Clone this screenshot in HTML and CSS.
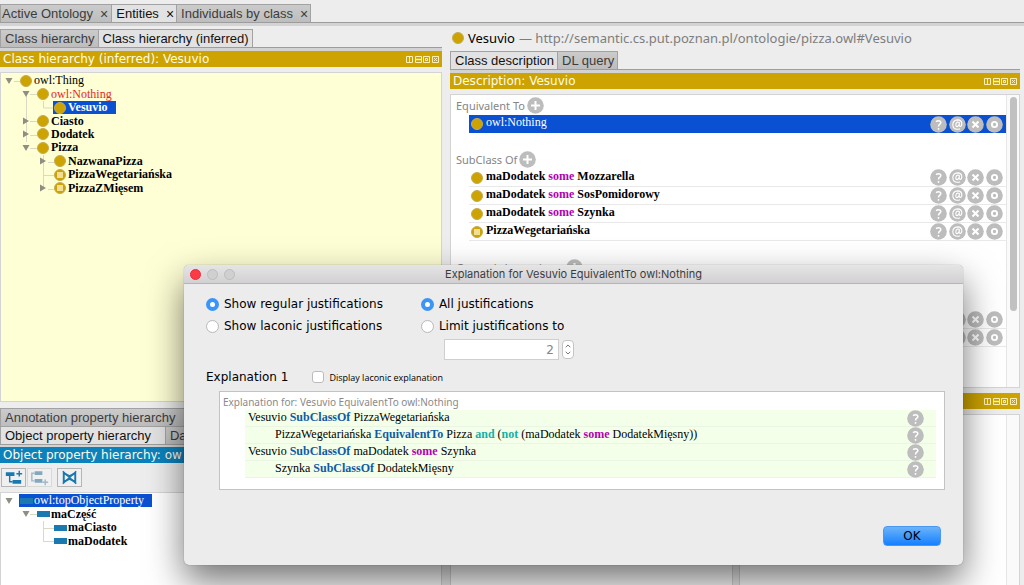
FILE: index.html
```html
<!DOCTYPE html>
<html lang="en">
<head>
<meta charset="utf-8">
<title>Ontology editor</title>
<link rel="stylesheet" href="styles.css">
</head>
<body>
<svg class="defs" aria-hidden="true">
  <symbol id="cls" viewBox="0 0 12 12"><circle cx="6" cy="6" r="5.5" fill="#cca300" stroke="#c4ab55"/></symbol>
  <symbol id="cls-def" viewBox="0 0 12 12"><circle cx="6" cy="6" r="5.5" fill="#cca300" stroke="#c4ab55"/><path d="M3 4h6M3 6h6M3 8h6" stroke="#fff3c4" stroke-width="1.300"/></symbol>
  <symbol id="prop" viewBox="0 0 13 6"><path d="M0 0h13v6H0z" fill="#1a79b0"/></symbol>
  <symbol id="open" viewBox="0 0 8 8"><path d="M.5 1h7L4 7z" fill="#8e8e82"/></symbol>
  <symbol id="closed" viewBox="0 0 8 8"><path d="M1 .5v7l6-3.500z" fill="#8e8e82"/></symbol>
  <symbol id="plus" viewBox="0 0 17 17"><circle cx="8.500" cy="8.500" r="8.300" fill="#bdbdbd"/><path d="M8.500 4v9M4 8.500h9" stroke="#fff" stroke-width="2"/></symbol>
  <symbol id="ask" viewBox="0 0 17 17"><circle cx="8.500" cy="8.500" r="8.300" fill="#bdbdbd"/><path d="M6 5.600q2.200-1.500 4-.5 1.700 1.400 0 2.900-1.600 1-1.500 2.500M8.500 12v1.700" fill="none" stroke="#fff" stroke-width="1.500"/></symbol>
  <symbol id="at" viewBox="0 0 17 17"><circle cx="8.500" cy="8.500" r="8.300" fill="#bdbdbd"/><path d="M10.500 6.500q-3-1.200-3.600 1.600-.4 2.600 1.300 2.500 1.700-.3 2.300-4.100-.8 3.900.6 4 1.700-.2 1.700-2.700 0-3.800-4.200-3.900-4.600.3-4.800 4.800.2 4.500 4.600 4.600 1.600 0 2.600-.6" fill="none" stroke="#fff" stroke-width="1.100"/></symbol>
  <symbol id="del" viewBox="0 0 17 17"><circle cx="8.500" cy="8.500" r="8.300" fill="#bdbdbd"/><path d="M5.500 5.500l6 6M11.500 5.500l-6 6" stroke="#fff" stroke-width="2"/></symbol>
  <symbol id="edit" viewBox="0 0 17 17"><circle cx="8.500" cy="8.500" r="8.300" fill="#bdbdbd"/><circle cx="8.500" cy="8.500" r="2.600" fill="none" stroke="#fff" stroke-width="1.900"/></symbol>
  <symbol id="wins" viewBox="0 0 34 9"><g fill="none" stroke="#fff0b8"><path d="M1.500 1.500h6v6h-6zM4.500 1.500v6M10.500 1.500h6v6h-6zM18.500 1.500h6v6h-6zM27.500 1.500h6v6h-6z"/><path d="M10 4.500h7" stroke-width="1.500"/><path d="M20.500 3.500h2v2h-2zM29 3l3 3M32 3l-3 3"/></g></symbol>
</svg>

<nav class="tabs main-tabs">
  <button class="tab">Active Ontology<span class="close">×</span></button>
  <button class="tab on">Entities<span class="close">×</span></button>
  <button class="tab">Individuals by class<span class="close">×</span></button>
</nav>
<div class="band"></div>

<main class="workspace">
  <section class="left">
    <div class="tabs"><button class="tab">Class hierarchy</button><button class="tab on">Class hierarchy (inferred)</button></div>
    <div class="band"></div>
    <h2 class="title">Class hierarchy (inferred): Vesuvio<svg class="wins"><use href="#wins"/></svg></h2>
    <div class="panel yellow">
      <div class="tree classes">
        <svg class="twigs" viewBox="0 0 60 121"><path d="M25.500 21v47M42.500 27v7h10M29 20.500h7M29 47.500h7M29 61.500h7M29 74.500h7M42.500 81v33M47 88.500h6M42 101.500h11M47 115.500h6M13 7.500h6"/></svg>
        <div class="row"><svg class="arrow"><use href="#open"/></svg><span class="node"><svg class="dot"><use href="#cls"/></svg>owl:Thing</span></div>
        <div class="row l1 bad"><svg class="arrow"><use href="#open"/></svg><span class="node"><svg class="dot"><use href="#cls"/></svg>owl:Nothing</span></div>
        <div class="row l2 bold"><span class="arrow"></span><span class="node sel"><svg class="dot"><use href="#cls"/></svg>Vesuvio</span></div>
        <div class="row l1 bold"><svg class="arrow"><use href="#closed"/></svg><span class="node"><svg class="dot"><use href="#cls"/></svg>Ciasto</span></div>
        <div class="row l1 bold"><svg class="arrow"><use href="#closed"/></svg><span class="node"><svg class="dot"><use href="#cls"/></svg>Dodatek</span></div>
        <div class="row l1 bold"><svg class="arrow"><use href="#open"/></svg><span class="node"><svg class="dot"><use href="#cls"/></svg>Pizza</span></div>
        <div class="row l2 bold"><svg class="arrow"><use href="#closed"/></svg><span class="node"><svg class="dot"><use href="#cls"/></svg>NazwanaPizza</span></div>
        <div class="row l2 bold"><span class="arrow"></span><span class="node"><svg class="dot"><use href="#cls-def"/></svg>PizzaWegetariańska</span></div>
        <div class="row l2 bold"><svg class="arrow"><use href="#closed"/></svg><span class="node"><svg class="dot"><use href="#cls-def"/></svg>PizzaZMięsem</span></div>
      </div>
    </div>
    <div class="lower">
      <div class="tabs"><button class="tab wide">Annotation property hierarchy</button></div>
      <div class="tabs second"><button class="tab on roomy">Object property hierarchy</button><button class="tab wide">Da</button></div>
      <div class="band thin"></div>
      <h2 class="title blue">Object property hierarchy: ow</h2>
      <div class="tools">
        <button class="tool" aria-label="Add sub property"><svg viewBox="0 0 24 17"><path d="M4 3h9v4H4zM11 11h9v4h-9z" fill="#1a79b0"/><path d="M8 7v6h3M15 4.500h6M18 1.500v6" fill="none" stroke="#1a79b0" stroke-width="1.500"/></svg></button>
        <button class="tool dim" aria-label="Add sibling property"><svg viewBox="0 0 24 17"><path d="M7 2h8v4H7zM7 10h8v4H7z" fill="#84a9bd"/><path d="M7 4H4v8h3M15 13.500h6M18 10.500v6" fill="none" stroke="#9fbac8" stroke-width="1.500"/></svg></button>
        <button class="tool last" aria-label="Delete property"><svg viewBox="0 0 24 17"><path d="M6 4v9l6-3 6 3V4l-6 3z" fill="none" stroke="#1a79b0" stroke-width="2"/><path d="M5 2l14 13M19 2L5 15" stroke="#1a79b0" stroke-width="1.500"/></svg></button>
      </div>
      <div class="panel fill">
        <div class="tree props">
          <svg class="twigs" viewBox="0 0 60 54"><path d="M29 20.500h7M42.500 27v21M42 34.500h11M42 47.500h11"/></svg>
          <div class="row"><svg class="arrow"><use href="#open"/></svg><span class="node sel"><svg class="bar"><use href="#prop"/></svg>owl:topObjectProperty</span></div>
          <div class="row l1 bold"><svg class="arrow"><use href="#open"/></svg><span class="node"><svg class="bar"><use href="#prop"/></svg>maCzęść</span></div>
          <div class="row l2 bold"><span class="arrow"></span><span class="node"><svg class="bar"><use href="#prop"/></svg>maCiasto</span></div>
          <div class="row l2 bold"><span class="arrow"></span><span class="node"><svg class="bar"><use href="#prop"/></svg>maDodatek</span></div>
        </div>
      </div>
    </div>
  </section>

  <section class="right">
    <h1 class="entity"><svg class="dot"><use href="#cls"/></svg>Vesuvio <span class="uri">— http://semantic.cs.put.poznan.pl/ontologie/pizza.owl#Vesuvio</span></h1>
    <div class="tabs"><button class="tab on">Class description</button><button class="tab">DL query</button></div>
    <div class="band"></div>
    <h2 class="title">Description: Vesuvio<svg class="wins"><use href="#wins"/></svg></h2>
    <div class="panel desc">
      <div class="axioms">
        <h3 class="head">Equivalent To <button class="ib" aria-label="Add"><svg><use href="#plus"/></svg></button></h3>
        <div class="axiom picked"><svg class="dot"><use href="#cls"/></svg><span class="text">owl:Nothing</span><span class="acts"><button class="ib" aria-label="Explain"><svg><use href="#ask"/></svg></button><button class="ib" aria-label="Annotate"><svg><use href="#at"/></svg></button><button class="ib" aria-label="Delete"><svg><use href="#del"/></svg></button><button class="ib" aria-label="Edit"><svg><use href="#edit"/></svg></button></span></div>
        <h3 class="head later">SubClass Of <button class="ib" aria-label="Add"><svg><use href="#plus"/></svg></button></h3>
        <div class="axiom"><svg class="dot"><use href="#cls"/></svg><span class="text">maDodatek <b class="some">some</b> Mozzarella</span><span class="acts"><button class="ib" aria-label="Explain"><svg><use href="#ask"/></svg></button><button class="ib" aria-label="Annotate"><svg><use href="#at"/></svg></button><button class="ib" aria-label="Delete"><svg><use href="#del"/></svg></button><button class="ib" aria-label="Edit"><svg><use href="#edit"/></svg></button></span></div>
        <div class="axiom"><svg class="dot"><use href="#cls"/></svg><span class="text">maDodatek <b class="some">some</b> SosPomidorowy</span><span class="acts"><button class="ib" aria-label="Explain"><svg><use href="#ask"/></svg></button><button class="ib" aria-label="Annotate"><svg><use href="#at"/></svg></button><button class="ib" aria-label="Delete"><svg><use href="#del"/></svg></button><button class="ib" aria-label="Edit"><svg><use href="#edit"/></svg></button></span></div>
        <div class="axiom"><svg class="dot"><use href="#cls"/></svg><span class="text">maDodatek <b class="some">some</b> Szynka</span><span class="acts"><button class="ib" aria-label="Explain"><svg><use href="#ask"/></svg></button><button class="ib" aria-label="Annotate"><svg><use href="#at"/></svg></button><button class="ib" aria-label="Delete"><svg><use href="#del"/></svg></button><button class="ib" aria-label="Edit"><svg><use href="#edit"/></svg></button></span></div>
        <div class="axiom"><svg class="dot"><use href="#cls-def"/></svg><span class="text">PizzaWegetariańska</span><span class="acts"><button class="ib" aria-label="Explain"><svg><use href="#ask"/></svg></button><button class="ib" aria-label="Annotate"><svg><use href="#at"/></svg></button><button class="ib" aria-label="Delete"><svg><use href="#del"/></svg></button><button class="ib" aria-label="Edit"><svg><use href="#edit"/></svg></button></span></div>
        <h3 class="head later">General class axioms <button class="ib" aria-label="Add"><svg><use href="#plus"/></svg></button></h3>
        <div class="inherited">
          <div class="axiom"><span class="text"></span><span class="acts"><button class="ib" aria-label="Explain"><svg><use href="#ask"/></svg></button><button class="ib" aria-label="Annotate"><svg><use href="#at"/></svg></button><button class="ib" aria-label="Delete"><svg><use href="#del"/></svg></button><button class="ib" aria-label="Edit"><svg><use href="#edit"/></svg></button></span></div>
          <div class="axiom"><span class="text"></span><span class="acts"><button class="ib" aria-label="Explain"><svg><use href="#ask"/></svg></button><button class="ib" aria-label="Annotate"><svg><use href="#at"/></svg></button><button class="ib" aria-label="Delete"><svg><use href="#del"/></svg></button><button class="ib" aria-label="Edit"><svg><use href="#edit"/></svg></button></span></div>
        </div>
      </div>
      <div class="track"><div class="thumb"></div></div>
    </div>
    <div class="split">
      <div class="pane"><h2 class="title"></h2><div class="panel fill"></div></div>
      <div class="pane"><h2 class="title"><svg class="wins"><use href="#wins"/></svg></h2><div class="panel fill tracked"><div class="track"></div></div></div>
    </div>
  </section>
</main>

<div class="dialog" role="dialog" aria-labelledby="dlg-title">
  <header class="dlg-bar">
    <span class="lights"><i class="light red"></i><i class="light"></i><i class="light"></i></span>
    <span id="dlg-title">Explanation for Vesuvio EquivalentTo owl:Nothing</span>
  </header>
  <form class="dlg-body">
    <div class="options">
      <div class="group">
        <label class="opt"><input type="radio" name="kind" checked>Show regular justifications</label>
        <label class="opt"><input type="radio" name="kind">Show laconic justifications</label>
      </div>
      <div class="group">
        <label class="opt"><input type="radio" name="limit" checked>All justifications</label>
        <label class="opt"><input type="radio" name="limit">Limit justifications to</label>
        <div class="spin"><input class="count" type="text" value="2" aria-label="Number of justifications"><button type="button" class="step" aria-label="Change number"><svg viewBox="0 0 11 18"><path d="M3 6.500L5.500 4 8 6.500M3 11.500L5.500 14 8 11.500" fill="none" stroke="#666"/></svg></button></div>
      </div>
    </div>
    <div class="ex-head"><span class="ex-name">Explanation 1</span><label class="laconic"><input type="checkbox">Display laconic explanation</label></div>
    <div class="ex-box">
      <div class="ex-for">Explanation for: Vesuvio EquivalentTo owl:Nothing</div>
      <div class="ex-row"><span class="text">Vesuvio <b class="kw">SubClassOf</b> PizzaWegetariańska</span><button type="button" class="ib" aria-label="Explain"><svg><use href="#ask"/></svg></button></div>
      <div class="ex-row deep"><span class="text">PizzaWegetariańska <b class="kw">EquivalentTo</b> Pizza <b class="op">and</b> (<b class="op">not</b> (maDodatek <b class="some">some</b> DodatekMięsny))</span><button type="button" class="ib" aria-label="Explain"><svg><use href="#ask"/></svg></button></div>
      <div class="ex-row"><span class="text">Vesuvio <b class="kw">SubClassOf</b> maDodatek <b class="some">some</b> Szynka</span><button type="button" class="ib" aria-label="Explain"><svg><use href="#ask"/></svg></button></div>
      <div class="ex-row deep"><span class="text">Szynka <b class="kw">SubClassOf</b> DodatekMięsny</span><button type="button" class="ib" aria-label="Explain"><svg><use href="#ask"/></svg></button></div>
    </div>
    <div class="dlg-foot"><button type="button" class="ok">OK</button></div>
  </form>
</div>
</body>
</html>
```
FILE: styles.css
```css
* { box-sizing: border-box; }
body {
  margin: 0;
  height: 100vh;
  overflow: hidden;
  display: flex;
  flex-direction: column;
  background: #ededed;
  color: #000;
  font: 12px "DejaVu Sans", sans-serif;
}
svg { display: block; flex: none; }
button { margin: 0; padding: 0; border: 0; background: none; color: inherit; font: inherit; }
h1, h2, h3 { margin: 0; font-weight: normal; }
.defs { position: absolute; width: 0; height: 0; }

/* tabs */
.tabs { display: flex; height: 18px; flex: none; }
.main-tabs { margin-top: 4px; }
.tab {
  display: flex;
  align-items: center;
  padding: 0 3px 0 4px;
  border: 1px solid #a2a2a2;
  border-bottom: 0;
  background: linear-gradient(#cbcbcb, #bdbdbd);
  color: #3c3c3c;
  font: 13px "Liberation Sans", sans-serif;
  white-space: nowrap;
}
.tab + .tab { border-left: 0; }
.tab.on { background: #e2e2e2; color: #111; }
.main-tabs .tab { padding: 0 3px 0 1px; }
.main-tabs .tab + .tab { padding: 0 2px 0 4px; }
.close { margin-left: 7px; font-size: 14px; }
.tab.wide { flex: 1; }
.tab.roomy { padding-right: 14px; }
.band { height: 4px; flex: none; border-top: 1px solid #9d9d9d; background: #d3d3d3; }
.band.thin { height: 3px; }

/* columns */
.workspace {
  flex: 1;
  min-height: 0;
  display: grid;
  grid-template-columns: 442fr 570fr;
  gap: 8px;
  padding: 3px 4px 0 0;
}
.left, .right { display: flex; flex-direction: column; min-width: 0; min-height: 0; }
.title {
  display: flex;
  align-items: center;
  justify-content: space-between;
  flex: none;
  height: 16px;
  padding: 0 3px;
  background: #cca300;
  color: #fffbe8;
  font-size: 12px;
  white-space: nowrap;
  overflow: hidden;
}
.title.blue { background: #0c82bd; }
.wins { width: 34px; height: 9px; margin-left: auto; }
.panel { margin-top: 5px; border: 1px solid #d4d4d4; background: #fff; }
.yellow { flex: none; height: 330px; background: #ffffd5; }
.fill { flex: 1; border-bottom: 0; }
.lower { display: flex; flex-direction: column; flex: 1; padding-top: 6px; min-height: 0; }

/* trees */
.tree { position: relative; display: flex; flex-direction: column; font: 12px/13px "Liberation Serif", serif; }
.classes { min-height: 121px; margin-top: 1px; }
.props { min-height: 54px; margin-top: 1px; }
.twigs { position: absolute; left: 0; top: 0; width: 60px; height: 100%; }
.twigs path { fill: none; stroke: #d9d9c4; }
.row { position: relative; flex: 1; display: flex; align-items: center; padding-left: 4px; }
.l1 { padding-left: 21px; }
.l2 { padding-left: 38px; }
.bold { font-weight: bold; }
.bad { color: #e8261a; }
.arrow { width: 8px; height: 8px; margin-right: 6px; }
.node { display: flex; align-items: center; gap: 2px; padding: 0 8px 0 1px; }
.sel { background: #0a50d2; color: #fff; }
.dot { width: 12px; height: 12px; }
.bar { width: 13px; height: 6px; }
.props .node { gap: 1px; }

/* property toolbar */
.tools { display: flex; gap: 1px; padding: 5px 1px 0; height: 25px; }
.tool { width: 25px; height: 19px; border: 1px solid #b5b5b5; background: #f0f0f0; }
.tool.dim { border-color: #d8d8d8; }
.tool.last { margin-left: 4px; }
.tool svg { width: 23px; height: 17px; }
.tools + .panel { margin-top: 4px; }

/* entity header and description */
.entity { display: flex; align-items: center; flex: none; gap: 4px; height: 18px; margin-bottom: 4px; padding-left: 2px; font: 13px "Noto Sans", sans-serif; white-space: nowrap; }
.uri { color: #7d7d7d; }
.desc { display: flex; flex: none; height: 294px; }
.axioms { flex: 1; padding: 1px 0 0 5px; }
.track { width: 13px; padding: 2px; border-left: 1px solid #e6e6e6; background: #fafafa; }
.thumb { width: 7px; height: 214px; margin-left: 1px; border-radius: 4px; background: #c1c1c1; }
.head { display: flex; align-items: center; gap: 2px; height: 19px; color: #858585; font: 11px "Noto Sans", sans-serif; }
.head.later { margin-top: 17px; }
.ib { width: 17px; height: 17px; flex: none; }
.ib svg { width: 17px; height: 17px; }
.axiom {
  display: flex;
  align-items: center;
  height: 18px;
  margin-left: 13px;
  padding: 0 3px 0 2px;
  border-bottom: 1px solid #e9e9e9;
  font: bold 12px "Liberation Serif", serif;
}
.axiom .text { flex: 1; padding: 0 0 3px 3px; }
.picked { border-bottom: 0; background: #0a50d2; color: #fff; font-weight: normal; }
.acts { display: flex; justify-content: space-between; width: 73px; }
.inherited { margin-top: 34px; }
.some { color: #b200b2; }
.split { flex: 1; display: grid; grid-template-columns: 283fr 281fr; gap: 6px; margin-top: 5px; }
.pane { display: flex; flex-direction: column; }
.tracked { display: flex; justify-content: flex-end; }

/* explanation dialog */
.dialog {
  position: absolute;
  left: 184px;
  right: 61px;
  top: 265px;
  border-radius: 5px;
  background: #ececec;
  box-shadow: 0 0 1px rgba(0, 0, 0, .5), 0 16px 36px rgba(0, 0, 0, .55);
}
.dlg-bar {
  position: relative;
  height: 19px;
  border-bottom: 1px solid #b5b5b5;
  border-radius: 5px 5px 0 0;
  background: linear-gradient(#e6e5e6, #d2d0d2);
  color: #3c3c3c;
  font: 11px/19px Inter, sans-serif;
  text-align: center;
}
.lights { position: absolute; left: 6px; top: 4px; display: flex; gap: 6px; }
.light { width: 11px; height: 11px; border: 1px solid #bdbdbd; border-radius: 50%; background: #d0d0d0; }
.light.red { border-color: #e5303a; background: #fc3b46; }
.dlg-body { padding: 9px 18px 19px 22px; }
.options { display: flex; gap: 38px; }
.opt { display: flex; align-items: center; gap: 5px; height: 22px; white-space: nowrap; }
.opt input {
  appearance: none;
  width: 13px;
  height: 13px;
  margin: 0;
  border: 1px solid #b8b8b8;
  border-radius: 50%;
  background: #fff;
}
.opt input:checked { border: 4px solid #3b94f7; }
.spin { display: flex; gap: 3px; margin: 2px 0 0 23px; }
.count { width: 115px; height: 21px; padding: 0 4px; border: 1px solid #cfcfcf; background: #fff; color: #858585; font: inherit; text-align: right; }
.step { width: 12px; height: 19px; margin-top: 1px; border: 1px solid #c4c4c4; border-radius: 4px; background: #fff; }
.step svg { width: 10px; height: 17px; }
.ex-head { display: flex; align-items: center; gap: 24px; height: 16px; margin-top: 9px; }
.laconic { display: flex; align-items: center; gap: 5px; font: 9px "Open Sans", sans-serif; }
.laconic input { appearance: none; width: 12px; height: 12px; margin: 0; border: 1px solid #bcbcbc; border-radius: 3px; background: #fff; }
.ex-box { margin: 6px 0 0 13px; padding: 2px 8px 11px 25px; border: 1px solid #c3c3c3; background: #fff; }
.ex-for { height: 16px; margin-left: -22px; color: #8a8a8a; font: 10px/16px "Noto Sans", sans-serif; }
.ex-row {
  display: flex;
  align-items: center;
  justify-content: space-between;
  height: 17px;
  padding: 0 12px 0 3px;
  border-bottom: 1px solid #ebf5e3;
  background: #f4ffe9;
  font: 12px "Liberation Serif", serif;
}
.ex-row .text { padding-bottom: 2px; }
.ex-row.deep { padding-left: 30px; }
.kw { color: #0f5aa8; }
.op { color: #12b0a6; }
.dlg-foot { display: flex; justify-content: flex-end; padding: 36px 4px 0 0; }
.ok { width: 58px; height: 20px; border: 1px solid #4a97f2; border-radius: 4px; background: linear-gradient(#6cb3fa, #1480ff); }
```
